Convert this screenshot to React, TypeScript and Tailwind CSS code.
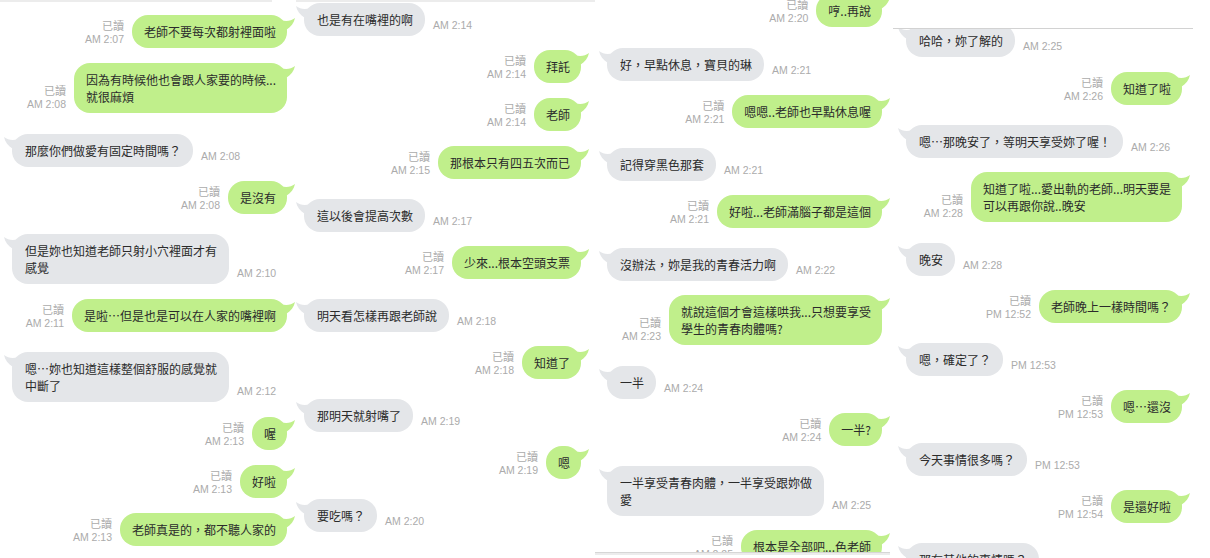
import React from "react";

type Msg = { o: boolean; t: string; time: string; mt: string };

const col1: Msg[] = [
  { o: true, t: "老師不要每次都射裡面啦", time: "AM 2:07", mt: "mt-[13px]" },
  { o: true, t: "因為有時候他也會跟人家要的時候...\n就很麻煩", time: "AM 2:08", mt: "mt-[15px]" },
  { o: false, t: "那麼你們做愛有固定時間嗎？", time: "AM 2:08", mt: "mt-[21px]" },
  { o: true, t: "是沒有", time: "AM 2:08", mt: "mt-[14px]" },
  { o: false, t: "但是妳也知道老師只射小穴裡面才有\n感覺", time: "AM 2:10", mt: "mt-[20px]" },
  { o: true, t: "是啦…但是也是可以在人家的嘴裡啊", time: "AM 2:11", mt: "mt-[15px]" },
  { o: false, t: "嗯…妳也知道這樣整個舒服的感覺就\n中斷了", time: "AM 2:12", mt: "mt-[20px]" },
  { o: true, t: "喔", time: "AM 2:13", mt: "mt-[15px]" },
  { o: true, t: "好啦", time: "AM 2:13", mt: "mt-[15px]" },
  { o: true, t: "老師真是的，都不聽人家的", time: "AM 2:13", mt: "mt-[15px]" },
];

const col2: Msg[] = [
  { o: false, t: "也是有在嘴裡的啊", time: "AM 2:14", mt: "mt-[1px]" },
  { o: true, t: "拜託", time: "AM 2:14", mt: "mt-[14px]" },
  { o: true, t: "老師", time: "AM 2:14", mt: "mt-[15px]" },
  { o: true, t: "那根本只有四五次而已", time: "AM 2:15", mt: "mt-[15px]" },
  { o: false, t: "這以後會提高次數", time: "AM 2:17", mt: "mt-[20px]" },
  { o: true, t: "少來...根本空頭支票", time: "AM 2:17", mt: "mt-[14px]" },
  { o: false, t: "明天看怎樣再跟老師說", time: "AM 2:18", mt: "mt-[20px]" },
  { o: true, t: "知道了", time: "AM 2:18", mt: "mt-[14px]" },
  { o: false, t: "那明天就射嘴了", time: "AM 2:19", mt: "mt-[20px]" },
  { o: true, t: "嗯", time: "AM 2:19", mt: "mt-[14px]" },
  { o: false, t: "要吃嗎？", time: "AM 2:20", mt: "mt-[20px]" },
];

const col3: Msg[] = [
  { o: true, t: "哼..再說", time: "AM 2:20", mt: "-mt-[6px]" },
  { o: false, t: "好，早點休息，寶貝的琳", time: "AM 2:21", mt: "mt-[21px]" },
  { o: true, t: "嗯嗯..老師也早點休息喔", time: "AM 2:21", mt: "mt-[14px]" },
  { o: false, t: "記得穿黑色那套", time: "AM 2:21", mt: "mt-[20px]" },
  { o: true, t: "好啦...老師滿腦子都是這個", time: "AM 2:21", mt: "mt-[14px]" },
  { o: false, t: "沒辦法，妳是我的青春活力啊", time: "AM 2:22", mt: "mt-[20px]" },
  { o: true, t: "就說這個才會這樣哄我...只想要享受\n學生的青春肉體嗎?", time: "AM 2:23", mt: "mt-[14px]" },
  { o: false, t: "一半", time: "AM 2:24", mt: "mt-[21px]" },
  { o: true, t: "一半?", time: "AM 2:24", mt: "mt-[14px]" },
  { o: false, t: "一半享受青春肉體，一半享受跟妳做\n愛", time: "AM 2:25", mt: "mt-[20px]" },
  { o: true, t: "根本是全部吧...色老師", time: "AM 2:25", mt: "mt-[14px]" },
];

const col4: Msg[] = [
  { o: false, t: "哈哈，妳了解的", time: "AM 2:25", mt: "-mt-[5px]" },
  { o: true, t: "知道了啦", time: "AM 2:26", mt: "mt-[15px]" },
  { o: false, t: "嗯…那晚安了，等明天享受妳了喔！", time: "AM 2:26", mt: "mt-[20px]" },
  { o: true, t: "知道了啦...愛出軌的老師...明天要是\n可以再跟你說..晚安", time: "AM 2:28", mt: "mt-[14px]" },
  { o: false, t: "晚安", time: "AM 2:28", mt: "mt-[21px]" },
  { o: true, t: "老師晚上一樣時間嗎？", time: "PM 12:52", mt: "mt-[14px]" },
  { o: false, t: "嗯，確定了？", time: "PM 12:53", mt: "mt-[20px]" },
  { o: true, t: "嗯…還沒", time: "PM 12:53", mt: "mt-[14px]" },
  { o: false, t: "今天事情很多嗎？", time: "PM 12:53", mt: "mt-[20px]" },
  { o: true, t: "是還好啦", time: "PM 12:54", mt: "mt-[14px]" },
  { o: false, t: "那有其他的事情嗎？", time: "PM 12:55", mt: "mt-[20px]" },
];

function OutTail() {
  return (
    <svg
      className="absolute right-[-8px] top-[2px]"
      width="14"
      height="14"
      viewBox="0 0 14 14"
    >
      <path d="M0 3 C5 5 10 4 14 1 C13 6 10 10 5 13 L0 13 Z" fill="#c0ef8b" />
    </svg>
  );
}

function InTail() {
  return (
    <svg
      className="absolute left-[-8px] top-[2px]"
      width="14"
      height="14"
      viewBox="0 0 14 14"
    >
      <path d="M14 3 C9 5 4 4 0 1 C1 6 4 10 9 13 L14 13 Z" fill="#e4e6e9" />
    </svg>
  );
}

function Row({ m }: { m: Msg }) {
  if (m.o) {
    return (
      <div className={`flex shrink-0 items-end justify-end gap-[8px] ${m.mt}`}>
        <div className="flex flex-col items-end whitespace-nowrap pb-[2px] leading-[14px] text-[#ababab]">
          <span className="text-[11px]">已讀</span>
          <span className="font-['Liberation_Sans',sans-serif] text-[10.5px]">{m.time}</span>
        </div>
        <div className="relative whitespace-pre rounded-[16px] bg-[#c0ef8b] py-[8px] pl-[12px] pr-[11px] text-[12px] leading-[17px] text-[#2b2b2b]">
          {m.t}
          <OutTail />
        </div>
      </div>
    );
  }
  return (
    <div className={`flex shrink-0 items-end justify-start gap-[8px] ${m.mt}`}>
      <div className="relative whitespace-pre rounded-[16px] bg-[#e4e6e9] py-[8px] pl-[13px] pr-[12px] text-[12px] leading-[17px] text-[#2b2b2b]">
        {m.t}
        <InTail />
      </div>
      <span className="whitespace-nowrap pb-[4px] font-['Liberation_Sans',sans-serif] text-[10.5px] leading-[14px] text-[#ababab]">
        {m.time}
      </span>
    </div>
  );
}

export default function App() {
  return (
    <div className="flex h-[558px] w-[1210px] overflow-hidden bg-white font-['Noto_Sans_CJK_TC','Noto_Sans',sans-serif]">
      {/* Column 1 */}
      <div className="flex h-[558px] w-[296px] shrink-0 flex-col overflow-hidden">
        <div className="h-[2px] w-[272px] shrink-0 bg-[#ececec]" />
        <div className="flex min-h-0 flex-1 flex-col overflow-hidden pl-[12px] pr-[9px]">
          {col1.map((m, i) => (
            <Row key={i} m={m} />
          ))}
        </div>
      </div>

      {/* Column 2 */}
      <div className="flex h-[558px] w-[299px] shrink-0 flex-col overflow-hidden">
        <div className="h-[2px] shrink-0 bg-[#ececec]" />
        <div className="flex min-h-0 flex-1 flex-col overflow-hidden pl-[8px] pr-[14px]">
          {col2.map((m, i) => (
            <Row key={i} m={m} />
          ))}
        </div>
      </div>

      {/* Column 3 */}
      <div className="flex h-[558px] w-[295px] shrink-0 flex-col overflow-hidden">
        <div className="flex h-[552px] shrink-0 flex-col overflow-hidden pl-[12px] pr-[8px]">
          {col3.map((m, i) => (
            <Row key={i} m={m} />
          ))}
        </div>
        <div className="h-[3px] shrink-0 border-t border-[#d6d6d6] bg-[#ececec]" />
      </div>

      {/* Column 4 */}
      <div className="flex h-[558px] w-[320px] shrink-0 flex-col overflow-hidden">
        <div className="ml-[3px] h-[29px] w-[300px] shrink-0 border-b border-[#d2d2d2] bg-white" />
        <div className="flex min-h-0 flex-1 flex-col overflow-hidden pl-[16px] pr-[28px]">
          {col4.map((m, i) => (
            <Row key={i} m={m} />
          ))}
        </div>
      </div>
    </div>
  );
}
